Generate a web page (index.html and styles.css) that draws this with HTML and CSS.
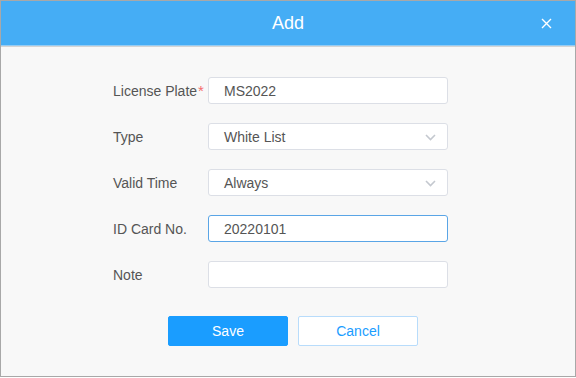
FILE: index.html
```html
<!DOCTYPE html>
<html>
<head>
<meta charset="utf-8">
<link rel="stylesheet" href="styles.css">
</head>
<body>
<div class="dialog">
  <div class="header">
    <span class="title">Add</span>
    <span class="close">
      <svg width="11" height="11" viewBox="0 0 11 11"><path d="M1 1L10 10M10 1L1 10" stroke="#fff" stroke-width="1.4" fill="none"/></svg>
    </span>
  </div>
  <div class="body">
    <div class="form">
      <div class="row">
        <div class="label">License Plate<span class="req">*</span></div>
        <div class="field">MS2022</div>
      </div>
      <div class="row">
        <div class="label">Type</div>
        <div class="field select">White List
          <svg class="chev" width="11" height="7" viewBox="0 0 11 7"><path d="M1 1L5.5 5.5L10 1" stroke="#c4c8cf" stroke-width="1.6" fill="none"/></svg>
        </div>
      </div>
      <div class="row">
        <div class="label">Valid Time</div>
        <div class="field select">Always
          <svg class="chev" width="11" height="7" viewBox="0 0 11 7"><path d="M1 1L5.5 5.5L10 1" stroke="#c4c8cf" stroke-width="1.6" fill="none"/></svg>
        </div>
      </div>
      <div class="row">
        <div class="label">ID Card No.</div>
        <div class="field focus">20220101</div>
      </div>
      <div class="row">
        <div class="label">Note</div>
        <div class="field"></div>
      </div>
    </div>
    <div class="buttons">
      <button class="btn primary">Save</button>
      <button class="btn ghost">Cancel</button>
    </div>
  </div>
</div>
</body>
</html>
```
FILE: styles.css
```css
html, body {
  margin: 0;
  padding: 0;
  background: #ffffff;
}
body {
  font-family: "Liberation Sans", Arial, sans-serif;
}
.dialog {
  width: 576px;
  height: 377px;
  box-sizing: border-box;
  border: 1px solid #a8a8a8;
  display: flex;
  flex-direction: column;
  background: #f8f8f8;
}
.header {
  height: 44px;
  background: #45adf5;
  border-bottom: 1px solid #96ccf3;
  box-shadow: 0 1px 0 #d4d4d4;
  display: flex;
  align-items: center;
  justify-content: center;
  position: relative;
  flex: none;
}
.title {
  color: #ffffff;
  font-size: 18px;
}
.close {
  position: absolute;
  right: 23px;
  top: 17px;
  width: 11px;
  height: 11px;
  display: flex;
}
.body {
  flex: 1;
  padding-top: 31px;
  display: flex;
  flex-direction: column;
  align-items: flex-start;
}
.form {
  display: flex;
  flex-direction: column;
  gap: 19px;
  margin-left: 112px;
}
.row {
  display: flex;
  align-items: center;
  height: 27px;
}
.label {
  width: 95px;
  font-size: 14px;
  color: #555555;
  display: flex;
  align-items: center;
}
.req {
  color: #f56c6c;
  font-size: 15px;
  margin-left: 1px;
}
.field {
  width: 240px;
  height: 27px;
  box-sizing: border-box;
  border: 1px solid #dcdfe6;
  border-radius: 3px;
  background: #ffffff;
  font-size: 14px;
  color: #555555;
  padding-left: 15px;
  display: flex;
  align-items: center;
  position: relative;
}
.field.focus {
  border-color: #5aa5e6;
}
.chev {
  position: absolute;
  right: 11px;
  top: 10px;
}
.buttons {
  display: flex;
  gap: 10px;
  margin-top: 28px;
  margin-left: 167px;
}
.btn {
  width: 120px;
  height: 30px;
  font-family: "Liberation Sans", Arial, sans-serif;
  font-size: 14px;
  border-radius: 2px;
  padding: 0;
}
.primary {
  background: #1a9dff;
  border: 1px solid #1a9dff;
  color: #ffffff;
}
.ghost {
  background: #ffffff;
  border: 1px solid #b8dcfb;
  color: #1a9dff;
}
```
